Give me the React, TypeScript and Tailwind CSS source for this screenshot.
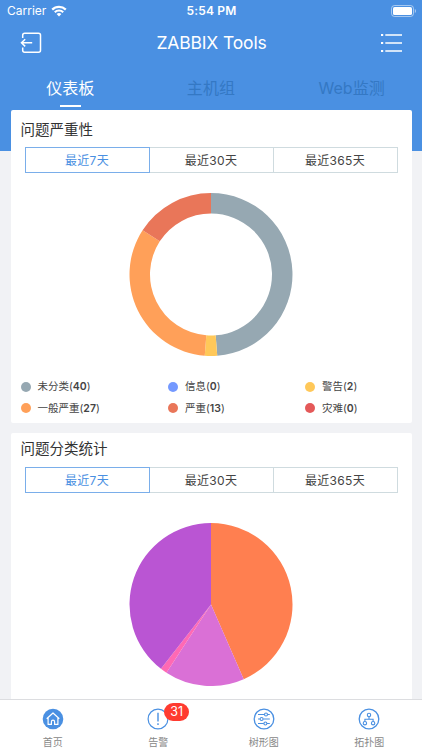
import { useState } from 'react';

const tabs = ['仪表板', '主机组', 'Web监测'];
const ranges = ['最近7天', '最近30天', '最近365天'];

const severities = [
  { name: '未分类', count: 40, color: '#96a8b2' },
  { name: '信息', count: 0, color: '#7499ff' },
  { name: '警告', count: 2, color: '#ffc859' },
  { name: '一般严重', count: 27, color: '#ffa059' },
  { name: '严重', count: 13, color: '#e97659' },
  { name: '灾难', count: 0, color: '#e45959' },
];

const categories = [
  { count: 33, color: '#ff7f50' },
  { count: 12, color: '#da70d6' },
  { count: 1, color: '#ff69b4' },
  { count: 30, color: '#ba55d3' },
];

type Slice = { count: number; color: string };

// r 外半径, hole 内半径 (0 为实心饼图)
function PieChart({ data, hole = 0 }: { data: Slice[]; hole?: number }) {
  const r = 81.5;
  const total = data.reduce((sum, d) => sum + d.count, 0);
  const point = (value: number, radius: number) => {
    const a = (value / total) * Math.PI * 2;
    return `${(82 + radius * Math.sin(a)).toFixed(2)} ${(82.5 - radius * Math.cos(a)).toFixed(2)}`;
  };
  let start = 0;

  return (
    <svg viewBox="0 0 164 164" className="mx-auto block w-[164px] h-[164px]">
      {data.map((d) => {
        if (!d.count) return null;
        const from = start;
        const to = start + d.count;
        const large = d.count / total > 0.5 ? 1 : 0;
        start = to;
        return (
          <path
            key={d.color}
            fill={d.color}
            d={`M${point(from, r)}A${r} ${r} 0 ${large} 1 ${point(to, r)}L${point(to, hole)}${
              hole ? `A${hole} ${hole} 0 ${large} 0 ${point(from, hole)}` : ''
            }Z`}
          />
        );
      })}
    </svg>
  );
}

function RangePicker() {
  const [active, setActive] = useState(0);
  return (
    <div className="mx-[14px] flex h-[26px]">
      {ranges.map((label, i) => (
        <button
          key={label}
          onClick={() => setActive(i)}
          className={`flex-1 border pt-px text-[12px] leading-[23px] tracking-[0.3px] ${i ? '-ml-px' : ''} ${
            active === i ? 'relative border-[#7aaeea] text-[#4a90e2]' : 'border-[#cfdbdf] text-[#444]'
          }`}
        >
          {label}
        </button>
      ))}
    </div>
  );
}

function StatusBar() {
  return (
    <div className="grid h-[22px] shrink-0 grid-cols-3 items-center pl-[7px] pr-[6px] text-[12px] text-white">
      <div className="flex items-center gap-[5px]">
        Carrier
        <svg viewBox="0 0 16 12" className="h-[12px] w-[16px]" fill="none" stroke="currentColor" strokeWidth="2.2">
          <path d="M1.2 4.6a9.7 9.7 0 0 1 13.6 0M3.8 7.2a6 6 0 0 1 8.4 0" />
          <path d="M8 11.5 5.6 9.1a3.4 3.4 0 0 1 4.8 0Z" fill="currentColor" stroke="none" />
        </svg>
      </div>
      <div className="text-center font-semibold tracking-[0.2px]">5:54 PM</div>
      <svg viewBox="0 0 25 12" className="h-[12px] w-[25px] justify-self-end">
        <rect x=".5" y=".5" width="22" height="11" rx="3" fill="none" stroke="#fff" strokeOpacity=".5" />
        <rect x="2" y="2" width="19" height="8" rx="1.6" fill="#fff" />
        <path d="M23.8 4v4c.8-.3 1.2-1.1 1.2-2s-.4-1.7-1.2-2Z" fill="#fff" fillOpacity=".5" />
      </svg>
    </div>
  );
}

function Header() {
  return (
    <header className="flex h-[42px] shrink-0 items-center justify-between px-[20px] text-white">
      <svg viewBox="0 0 22 22" className="h-[22px] w-[22px]" fill="none" stroke="currentColor" strokeWidth="1.5">
        <path d="M2.7 6V3.2Q2.7 1.2 4.7 1.2H18.5Q20.5 1.2 20.5 3.2V18.3Q20.5 20.3 18.5 20.3H4.7Q2.7 20.3 2.7 18.3V15.6" />
        <path d="M12.2 10.8H1.5M5.2 7.2 1.5 10.8 5.2 14.4" />
      </svg>
      <h1 className="text-[17.5px] tracking-[-0.15px]">ZABBIX Tools</h1>
      <svg viewBox="0 0 21 20" className="h-[20px] w-[21px]" stroke="currentColor" strokeWidth="1.7">
        <path d="M4.3 2H21M4.3 10H21M4.3 18H21" />
        <path d="M0 2h2.2M0 10h2.2M0 18h2.2" strokeWidth="2.2" />
      </svg>
    </header>
  );
}

const iconClass = 'h-[22px] w-[22px]';

function HomeIcon() {
  return (
    <svg viewBox="0 0 22 22" className={iconClass} fill="none">
      <circle cx="11" cy="11" r="10.3" fill="#4a90e2" />
      <path
        d="M4.7 10.7 11 5l6.3 5.7M6.1 9.8v6.6h3.3v-2.6a1.6 1.6 0 0 1 3.2 0v2.6h3.3V9.8"
        stroke="#fff"
        strokeWidth="1.2"
        strokeLinejoin="round"
      />
    </svg>
  );
}

function AlertIcon() {
  return (
    <svg viewBox="0 0 22 22" className={iconClass} fill="none" stroke="#4a90e2">
      <circle cx="11" cy="11" r="9.9" strokeWidth="1.2" />
      <path d="M11 4.8v8.6M11 15.2v1.7" strokeWidth="1.4" />
    </svg>
  );
}

function TreeIcon() {
  return (
    <svg viewBox="0 0 22 22" className={iconClass} fill="none" stroke="#4a90e2" strokeWidth="1.1">
      <circle cx="11" cy="11" r="9.8" strokeWidth="1.3" />
      <path d="M5 6.5h6.5M14.5 6.5h2.3M5 11h1.9M10.3 11h6.5M5 15.5h5.8M14 15.5h2.8" />
      <circle cx="13" cy="6.5" r="1.5" />
      <circle cx="8.6" cy="11" r="1.5" />
      <circle cx="12.4" cy="15.5" r="1.5" />
    </svg>
  );
}

function TopologyIcon() {
  return (
    <svg viewBox="0 0 22 22" className={iconClass} fill="none" stroke="#4a90e2" strokeWidth="1.1">
      <circle cx="11" cy="11" r="9.8" strokeWidth="1.3" />
      <circle cx="11" cy="7" r="1.7" />
      <circle cx="6.9" cy="15.2" r="1.7" />
      <circle cx="15.1" cy="15.2" r="1.7" />
      <path d="M11 8.7V11.2M6.9 13.5V11.2H15.1V13.5" />
    </svg>
  );
}

const navItems = [
  { label: '首页', icon: HomeIcon },
  { label: '告警', icon: AlertIcon, badge: 31 },
  { label: '树形图', icon: TreeIcon },
  { label: '拓扑图', icon: TopologyIcon },
];

export default function App() {
  const [tab, setTab] = useState(0);

  return (
    <div className="flex h-[750px] w-[422px] flex-col overflow-hidden bg-[linear-gradient(#4a90e2_151px,#f1f2f5_151px)] font-[Inter,'Noto_Sans_CJK_SC',sans-serif]">
      <StatusBar />
      <Header />

      {/* 顶部标签 */}
      <nav className="flex h-[46px] shrink-0">
        {tabs.map((label, i) => (
          <button
            key={label}
            onClick={() => setTab(i)}
            className={`flex flex-1 flex-col items-center pt-[12px] text-[16px] leading-6 tracking-[0.1px] ${
              tab === i ? 'text-white' : 'text-[#3478c4]'
            }`}
          >
            {label}
            {tab === i && <span className="mt-[5px] h-[2px] w-[21px] bg-white" />}
          </button>
        ))}
      </nav>

      <main className="flex min-h-0 flex-1 flex-col gap-[10px] overflow-hidden px-[10.5px]">
        {/* 问题严重性 */}
        <section className="h-[313px] shrink-0 rounded-[2px] bg-white">
          <h2 className="h-[37px] px-[10px] pt-[9px] text-[14.5px] leading-[22px] text-[#333]">问题严重性</h2>
          <RangePicker />
          <div className="mt-[19px]">
            <PieChart data={severities} hole={61} />
          </div>
          <ul className="mt-[20px] grid grid-cols-[147.5px_137px_1fr] pl-[10px] text-[10.5px] leading-[21.5px] text-[#444]">
            {severities.map((s) => (
              <li key={s.name} className="flex items-center">
                <i className="mr-[7px] size-[10px] rounded-full" style={{ backgroundColor: s.color }} />
                <span>
                  {s.name}(<b className="font-semibold">{s.count}</b>)
                </span>
              </li>
            ))}
          </ul>
        </section>

        {/* 问题分类统计 */}
        <section className="h-[313px] shrink-0 rounded-[2px] bg-white">
          <h2 className="h-[34px] px-[10px] pt-[5px] text-[14.5px] leading-[22px] text-[#333]">问题分类统计</h2>
          <RangePicker />
          <div className="mt-[29px]">
            <PieChart data={categories} />
          </div>
        </section>
      </main>

      {/* 底部导航 */}
      <footer className="flex h-[51px] shrink-0 border-t border-[#dcdde0] bg-white">
        {navItems.map(({ label, icon: Icon, badge }) => (
          <button key={label} className="flex flex-1 flex-col items-center pt-[8px] text-[10px] text-[#888]">
            <span className="relative">
              <Icon />
              {badge && (
                <span className="absolute -top-[5px] left-[17px] h-[18px] w-[25px] rounded-full bg-[#ff3b30] text-center text-[12.5px] leading-[18px] text-white">
                  {badge}
                </span>
              )}
            </span>
            <span className="mt-[5px] leading-[15px]">{label}</span>
          </button>
        ))}
      </footer>
    </div>
  );
}
